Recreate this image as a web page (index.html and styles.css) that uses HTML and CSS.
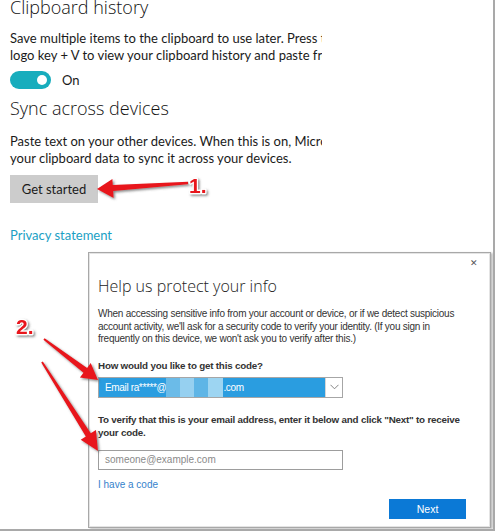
FILE: index.html
```html
<!DOCTYPE html>
<html>
<head>
<meta charset="utf-8">
<link rel="stylesheet" href="styles.css">
</head>
<body>
<div class="page">
  <div class="settings">
    <h1 class="heading">Clipboard history</h1>
    <p class="desc">Save multiple items to the clipboard to use later. Press the Windows<br>logo key + V to view your clipboard history and paste from it.</p>
    <div class="toggle-row">
      <span class="toggle"><span class="knob"></span></span>
      <span class="toggle-label">On</span>
    </div>
    <h1 class="heading">Sync across devices</h1>
    <p class="desc desc-sync">Paste text on your other devices. When this is on, Microsoft syncs<br>your clipboard data to sync it across your devices.</p>
    <button class="btn-start">Get started</button>
    <a class="privacy">Privacy statement</a>
  </div>

  <div class="dialog">
    <div class="dlg-top"><span class="close">&#x2715;</span></div>
    <h2 class="dlg-title">Help us protect your info</h2>
    <p class="dlg-text">When accessing sensitive info from your account or device, or if we detect suspicious<br>account activity, we'll ask for a security code to verify your identity. (If you sign in<br>frequently on this device, we won't ask you to verify after this.)</p>
    <p class="dlg-label">How would you like to get this code?</p>
    <div class="select">
      <div class="select-value">Email ra*****@<span class="blur b1"></span><span class="blur b2"></span><span class="blur b3"></span><span class="blur b4"></span>.com</div>
      <div class="select-arrow"><svg width="9" height="6" viewBox="0 0 9 6"><path d="M0.5 0.8 L4.5 4.8 L8.5 0.8" fill="none" stroke="#777" stroke-width="0.9"/></svg></div>
    </div>
    <p class="dlg-label dlg-label2">To verify that this is your email address, enter it below and click "Next" to receive<br>your code.</p>
    <div class="input">someone@example.com</div>
    <a class="dlg-link">I have a code</a>
    <div class="dlg-actions"><button class="btn-next">Next</button></div>
  </div>

  <svg class="annot" width="497" height="532" viewBox="0 0 497 532">
    <defs>
      <filter id="sh" x="-20%" y="-20%" width="140%" height="140%">
        <feDropShadow dx="1.5" dy="1.5" stdDeviation="1" flood-color="#555" flood-opacity="0.7"/>
      </filter>
    </defs>
    <g fill="#e8141c" filter="url(#sh)">
      <polygon points="188,181.8 112.8,185 112.4,179 97,189 113.6,198 113.2,191 188,184.2"/>
      <polygon points="44.6,338.2 87.1,367.9 90.7,363.1 98,380 79.9,377.5 83.5,372.7 43.4,339.8"/>
      <polygon points="42.8,361.4 90.8,433.3 95.9,430.0 98,451 80.7,439.8 85.8,436.5 41.2,362.6"/>
    </g>
    <g class="num" filter="url(#sh)">
      <text x="189" y="193">1.</text>
      <text x="16" y="334">2.</text>
    </g>
  </svg>
</div>
</body>
</html>
```
FILE: styles.css
```css
html, body {
  margin: 0;
  padding: 0;
  background: #fff;
}
body {
  width: 497px;
  height: 532px;
  overflow: hidden;
  font-family: "Lato", "Open Sans", sans-serif;
  color: #1a1a1a;
}
.page {
  position: relative;
  width: 495px;
  height: 531px;
  box-sizing: border-box;
  border-right: 2px solid #a9a9a9;
  border-bottom: 2px solid #a9a9a9;
  overflow: hidden;
}
.settings {
  width: 312px;
  padding-left: 10px;
  overflow: hidden;
  display: flex;
  flex-direction: column;
  align-items: flex-start;
}
.heading {
  margin: 0;
  font-family: "Open Sans", sans-serif;
  font-weight: 300;
  font-size: 18px;
  line-height: 22px;
  color: #111;
  white-space: nowrap;
}
.heading:first-child {
  margin-top: -4px;
}
.desc {
  margin: 12px 0 0;
  font-size: 13px;
  line-height: 16.5px;
  white-space: nowrap;
  color: #1a1a1a;
}
.toggle-row {
  display: flex;
  align-items: center;
  gap: 11px;
  margin-top: 7px;
  height: 19px;
}
.toggle {
  width: 41px;
  height: 18px;
  border-radius: 9px;
  background: #18adbd;
  display: flex;
  align-items: center;
  justify-content: flex-end;
  padding-right: 4px;
  box-sizing: border-box;
}
.knob {
  width: 10px;
  height: 10px;
  border-radius: 50%;
  background: #fff;
}
.toggle-label {
  font-size: 13px;
  color: #1a1a1a;
}
.heading + .desc-sync { margin-top: 14px; }
.toggle-row + .heading { margin-top: 8px; }
.btn-start {
  margin-top: 9px;
  width: 88px;
  height: 28px;
  border: none;
  background: #cccccc;
  font-family: "Lato", sans-serif;
  font-size: 13px;
  color: #1a1a1a;
  padding: 0;
}
.privacy {
  margin-top: 24px;
  font-size: 13px;
  color: #1aa0c4;
}

.dialog {
  position: absolute;
  left: 88px;
  top: 252px;
  width: 403px;
  height: 276px;
  box-sizing: border-box;
  border: 1px solid #a8a8a8;
  box-shadow: 2px 1px 2px rgba(0,0,0,0.25), inset 0 0 0 1px #e4e4e4;
  background: #fff;
  padding: 0 24px 0 9px;
  display: flex;
  flex-direction: column;
  align-items: flex-start;
  font-family: "Liberation Sans", sans-serif;
}
.dlg-top {
  align-self: stretch;
  display: flex;
  justify-content: flex-end;
  height: 20px;
  margin-right: -12px;
}
.close {
  font-size: 9px;
  color: #555;
  margin-top: 5px;
}
.dlg-title {
  margin: 2px 0 0;
  font-family: "Open Sans", sans-serif;
  font-weight: 300;
  font-size: 16px;
  line-height: 22px;
  color: #222;
}
.dlg-text {
  margin: 11px 0 0;
  font-size: 10px;
  line-height: 12.5px;
  letter-spacing: -0.25px;
  white-space: nowrap;
  color: #333;
}
.dlg-label {
  margin: 13px 0 0;
  font-size: 9.8px;
  line-height: 13px;
  font-weight: bold;
  letter-spacing: -0.2px;
  color: #333;
  white-space: nowrap;
}
.select {
  margin-top: 5px;
  width: 245px;
  height: 21px;
  box-sizing: border-box;
  border: 1px solid #a6a6a6;
  display: flex;
}
.select-value {
  flex: 1;
  background: #2a9de0;
  color: #fff;
  font-size: 10px;
  display: flex;
  align-items: center;
  padding-left: 6px;
  letter-spacing: -0.35px;
}
.blur {
  display: inline-block;
  height: 19px;
  background: #7ec4ea;
}
.b1 { width: 14px; background: #6bbbe8; }
.b2 { width: 14px; background: #96d0f0; }
.b3 { width: 14px; background: #5eb5e6; }
.b4 { width: 15px; background: #9dd5f2; }
.select-arrow {
  width: 16px;
  display: flex;
  align-items: center;
  justify-content: center;
  background: #fff;
  border-left: 1px solid #d6d6d6;
}
.dlg-label2 {
  margin-top: 15px;
}
.input {
  margin-top: 11px;
  width: 245px;
  height: 20px;
  box-sizing: border-box;
  border: 1px solid #9d9d9d;
  font-size: 10px;
  color: #8a8a8a;
  display: flex;
  align-items: center;
  padding-left: 6px;
}
.dlg-link {
  margin-top: 9px;
  font-size: 10px;
  color: #3582cc;
}
.dlg-actions {
  align-self: stretch;
  display: flex;
  justify-content: flex-end;
  margin-top: 9px;
}
.btn-next {
  width: 77px;
  height: 20px;
  border: none;
  background: #0b79d6;
  color: #fff;
  font-family: "Liberation Sans", sans-serif;
  font-size: 10.5px;
  padding: 0;
}
.annot {
  position: absolute;
  left: 0;
  top: 0;
  pointer-events: none;
}
.num text {
  font-family: "Liberation Sans", sans-serif;
  font-weight: bold;
  font-size: 21px;
  fill: #e8141c;
  stroke: #fff;
  stroke-width: 2.5px;
  paint-order: stroke;
  stroke-linejoin: round;
}
```
